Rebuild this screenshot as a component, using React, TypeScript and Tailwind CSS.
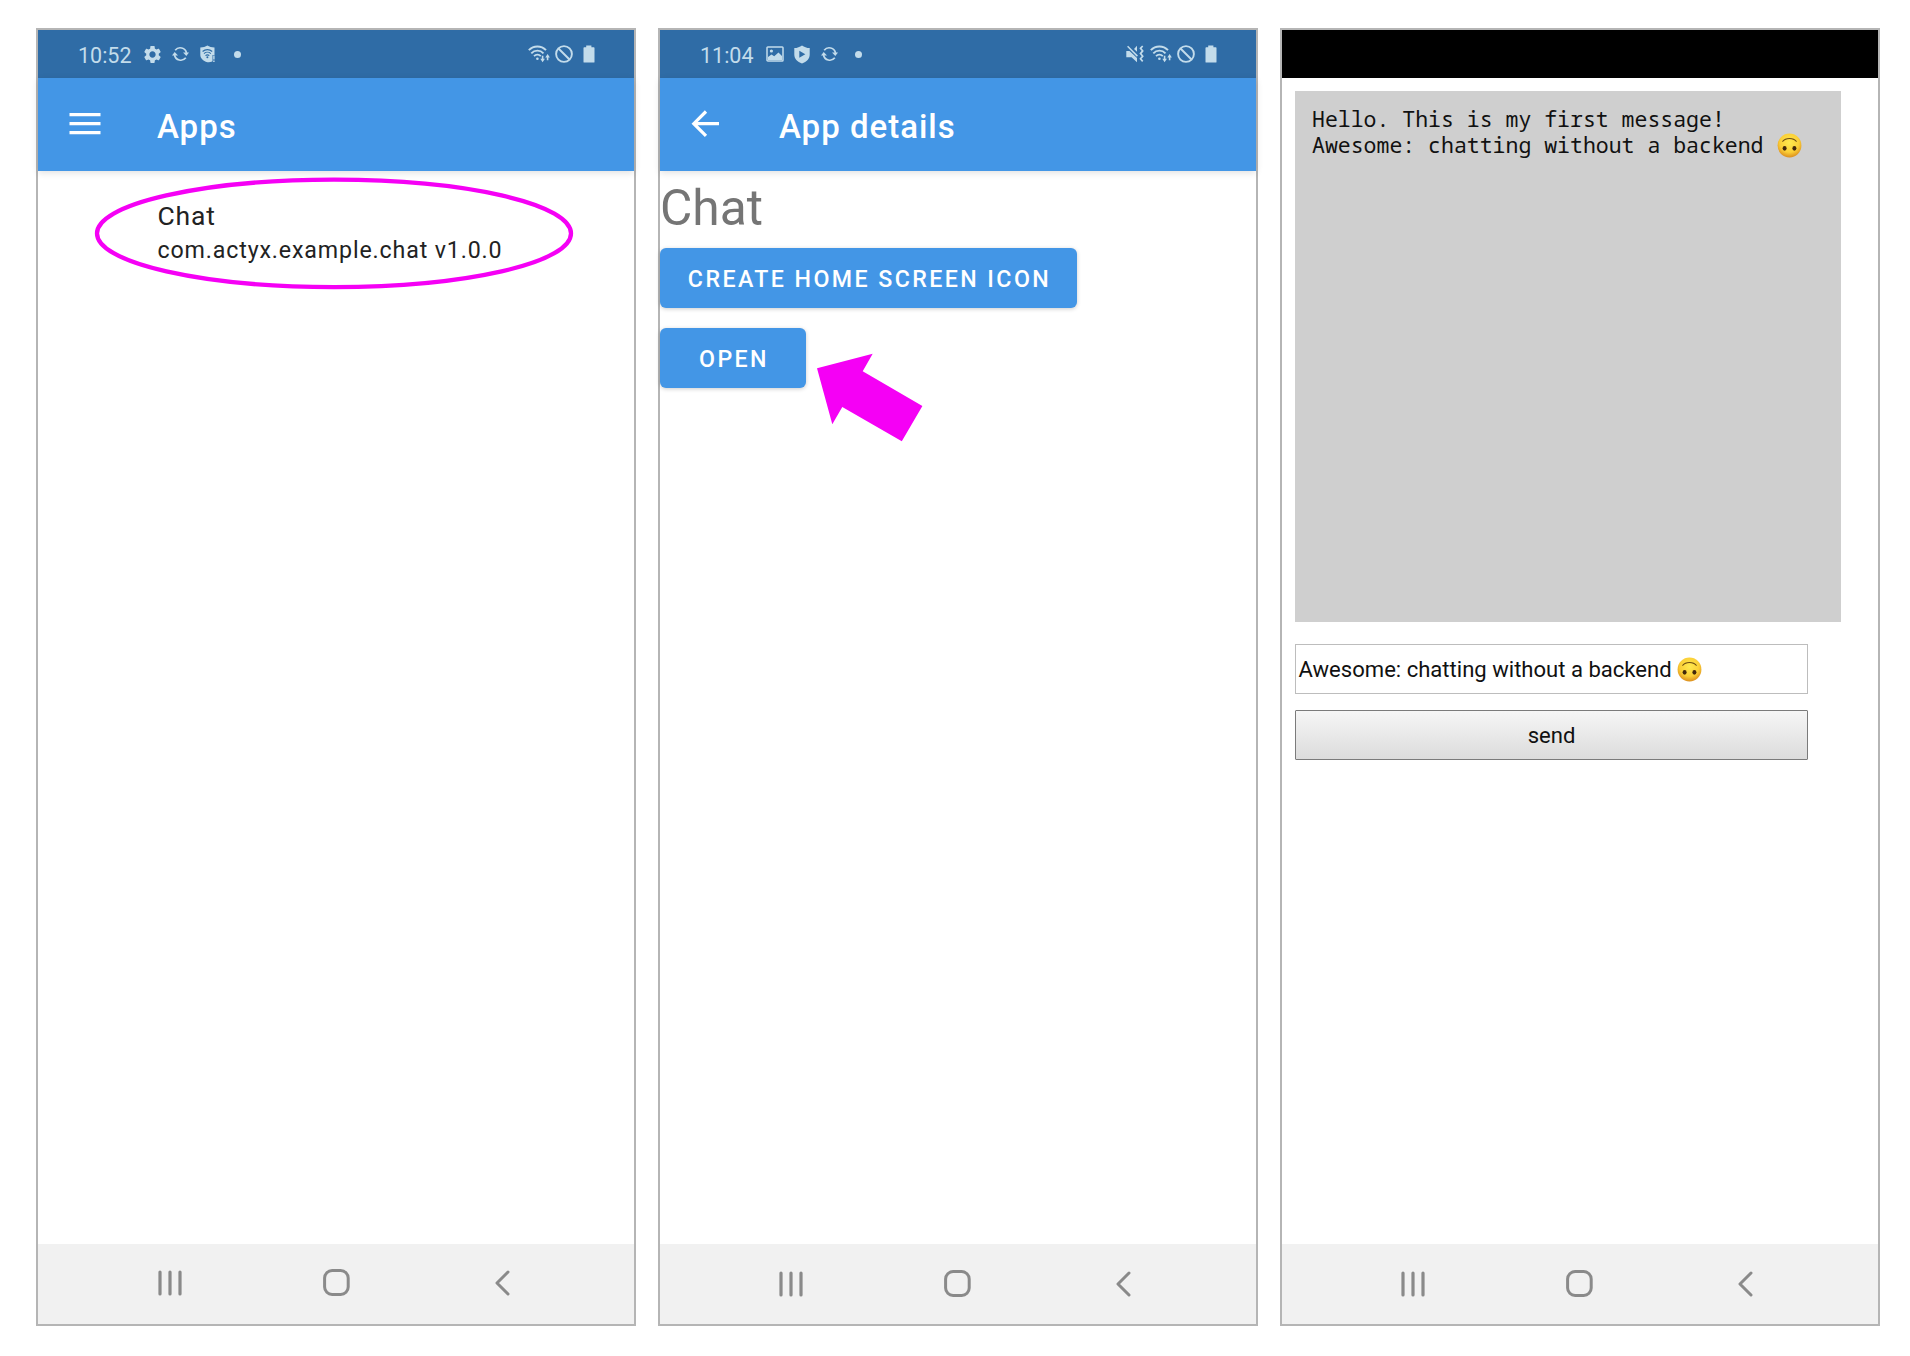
import React from "react";

const ICON = "#c3dceb";

function Gear() {
  return (
    <svg width="21" height="21" viewBox="0 0 24 24" fill={ICON}>
      <path d="M19.14 12.94c.04-.3.06-.61.06-.94 0-.32-.02-.64-.07-.94l2.03-1.58c.18-.14.23-.41.12-.61l-1.92-3.32c-.12-.22-.37-.29-.59-.22l-2.39.96c-.5-.38-1.03-.7-1.62-.94l-.36-2.54c-.04-.24-.24-.41-.48-.41h-3.84c-.24 0-.43.17-.47.41l-.36 2.54c-.59.24-1.13.57-1.62.94l-2.39-.96c-.22-.08-.47 0-.59.22L2.74 8.87c-.12.21-.08.47.12.61l2.03 1.58c-.05.3-.09.63-.09.94s.02.64.07.94l-2.03 1.58c-.18.14-.23.41-.12.61l1.92 3.32c.12.22.37.29.59.22l2.39-.96c.5.38 1.03.7 1.62.94l.36 2.54c.05.24.24.41.48.41h3.84c.24 0 .44-.17.47-.41l.36-2.54c.59-.24 1.13-.56 1.62-.94l2.39.96c.22.08.47 0 .59-.22l1.92-3.32c.12-.22.07-.47-.12-.61l-2.01-1.58zM12 15.6c-1.98 0-3.6-1.62-3.6-3.6s1.62-3.6 3.6-3.6 3.6 1.62 3.6 3.6-1.62 3.6-3.6 3.6z" />
    </svg>
  );
}

function Sync() {
  return (
    <svg width="17" height="16" viewBox="0 0 17 16" fill="none" stroke={ICON} strokeWidth="1.7">
      <path d="M3.2 4.2A6.4 6.4 0 0 1 14.5 7" />
      <path d="M13.8 11.8A6.4 6.4 0 0 1 2.5 9" />
      <path d="M11 6.400h6l-2.700 3.500z" fill={ICON} stroke="none" />
      <path d="M0 9.600h6L2.700 6.100z" fill={ICON} stroke="none" />
    </svg>
  );
}

function WifiShield() {
  return (
    <svg width="16" height="18" viewBox="0 0 16 18">
      <path d="M0.3 2.6C3.2 2.6 5.4 1.9 7.4.6c2 1.3 4.200 2 7.100 2V10h-2v6.200c-1.300.7-3 1-5.100 1.100C3 15.800.3 13.500.3 9.500z" fill={ICON} />
      <g fill="none" stroke="#2f6ca6" strokeWidth="1.100">
        <path d="M2.600 6.500a7 7 0 0 1 9.600 0M4 8.600a5 5 0 0 1 6.800 0M5.500 10.600a3 3 0 0 1 3.800 0" />
      </g>
      <circle cx="7.400" cy="12.300" r="1" fill="#2f6ca6" />
      <path d="M13.200 10.500h1.400v4h-1.400zM13.200 15.600h1.400v1.500h-1.400z" fill={ICON} />
    </svg>
  );
}

function PlayShield() {
  return (
    <svg width="16" height="19" viewBox="0 0 16 19">
      <path d="M8 .4C10.300 2 12.600 2.900 15.700 3v6.500c0 4.200-3 7.400-7.700 9-4.700-1.600-7.700-4.800-7.700-9V3C3.400 2.900 5.700 2 8 .4z" fill={ICON} />
      <path d="M5.300 5.700v7l6-3.500z" fill="#2f6ca6" />
    </svg>
  );
}

function Picture() {
  return (
    <svg width="18" height="16" viewBox="0 0 18 16">
      <rect x="1" y="1" width="16" height="14" rx=".8" fill="none" stroke={ICON} strokeWidth="1.500" />
      <circle cx="5.400" cy="5" r="1.600" fill={ICON} />
      <path d="M2 14v-3l3.500-2.600 2.700 1.800L12.500 6.500 16 10v4z" fill={ICON} />
    </svg>
  );
}

function Wifi() {
  return (
    <svg width="22" height="18" viewBox="0 0 22 18" fill="none" stroke={ICON} strokeWidth="1.900">
      <path d="M.8 5.100a12 12 0 0 1 17.200 0M3.300 8.300a8.400 8.400 0 0 1 12.200 0M6 11.100a5 5 0 0 1 6.800 0" />
      <circle cx="9.400" cy="13.700" r="1.300" fill={ICON} stroke="none" />
      <path d="M14.600 10.800v4M19.600 15.300v-4" strokeWidth="1.600" />
      <path d="M12.300 13.800h4.600l-2.300 3.500zM17.300 12.500h4.600L19.600 9z" fill={ICON} stroke="none" />
    </svg>
  );
}

function Blocked() {
  return (
    <svg width="18" height="18" viewBox="0 0 18 18" fill="none" stroke={ICON} strokeWidth="1.900">
      <circle cx="9" cy="9" r="7.900" />
      <path d="M3.500 3.500l11 11" />
    </svg>
  );
}

function Battery() {
  return (
    <svg width="12" height="18" viewBox="0 0 12 18" fill={ICON}>
      <path d="M3.200.5h5.200v1.700h2.400q.7 0 .7.700v14q0 .7-.7.700H1.200q-.7 0-.7-.7v-14q0-.7.7-.7h2z" />
    </svg>
  );
}

function MuteVibrate() {
  return (
    <svg width="18" height="18" viewBox="0 0 18 18">
      <path d="M.3 6h3.200L11 13v4.300L5.600 12.300H.3zM11 .8v6L8 4z" fill={ICON} />
      <path d="M1.600 1.300l9.800 9.800" stroke={ICON} strokeWidth="1.500" />
      <path d="M16.700 1l-2.200 2.300 2.200 2.600-2.200 2.700 2.200 2.600-2.200 2.600 2.200 2.600" fill="none" stroke={ICON} strokeWidth="1.700" />
    </svg>
  );
}

function Dot() {
  return <span className="size-[7px] rounded-full bg-[#c3dceb]" />;
}

function Smiley() {
  return (
    <svg className="inline-block" width="25" height="25" viewBox="0 0 25 25" role="img" aria-label="🙃">
      <defs>
        <radialGradient id="face" cx=".5" cy=".38" r=".62">
          <stop offset="0" stopColor="#ffe94f" />
          <stop offset=".65" stopColor="#fbcf37" />
          <stop offset="1" stopColor="#dc8f1e" />
        </radialGradient>
      </defs>
      <circle cx="12.500" cy="12.500" r="11.900" fill="url(#face)" />
      <path d="M5.800 8.300C8.500 4.600 16.500 4.600 19.200 8.300" fill="none" stroke="#6b4a12" strokeWidth="1.100" strokeLinecap="round" />
      <ellipse cx="7.600" cy="15.300" rx="2" ry="2.400" fill="#43280b" />
      <ellipse cx="17.400" cy="15.300" rx="2" ry="2.400" fill="#43280b" />
    </svg>
  );
}

function NavBar({ pad }: { pad: string }) {
  return (
    <nav className={`flex h-20 shrink-0 items-center bg-[#f1f1f1] ${pad}`}>
      <svg width="24" height="26" viewBox="0 0 24 26" stroke="#8a8a8a" strokeWidth="3.200" strokeLinecap="round">
        <path d="M2 2v22M12 2v22M22 2v22" />
      </svg>
      <svg className="ml-[141px]" width="27" height="27" viewBox="0 0 27 27" fill="none" stroke="#8a8a8a" strokeWidth="3">
        <rect x="1.600" y="1.600" width="23.600" height="23.800" rx="7.500" />
      </svg>
      <svg className="ml-[145px]" width="15" height="26" viewBox="0 0 15 26" fill="none" stroke="#8a8a8a" strokeWidth="3" strokeLinecap="round" strokeLinejoin="round">
        <path d="M13 2L2 13l11 11" />
      </svg>
    </nav>
  );
}

function TopBar({ icon, title, pad }: { icon: React.ReactNode; title: string; pad: string }) {
  return (
    <header className={`flex h-[93px] shrink-0 items-center bg-[#4396e6] text-white shadow-[0_2px_7px_rgba(0,0,0,0.12)] ${pad}`}>
      <div className="flex w-[88px] items-center pb-0.5">{icon}</div>
      <h1 className="pt-[5px] text-[33px] leading-10 font-medium tracking-[1px]">{title}</h1>
    </header>
  );
}

const phone = "flex h-[1298px] shrink-0 flex-col border-2 border-[#b5b5b5] bg-white";
const status = "flex h-12 shrink-0 items-center bg-[#2f6ca6]";
const clock = "pt-[3px] text-[21.5px] leading-6 text-[#c3dceb] w-[54px] whitespace-nowrap";
const button =
  "flex h-[60px] items-center justify-center rounded-[6px] bg-[#4396e6] pt-0.5 pl-0.5 text-[23.2px] font-medium tracking-[2.42px] text-white shadow-[0_1px_4px_rgba(0,0,0,0.2)]";

export default function App() {
  return (
    <main className="flex h-[1356px] w-[1910px] bg-white pt-7 pl-9 font-[Roboto,sans-serif]">
      <section className={`${phone} w-[600px]`}>
        <div className={`${status} pl-10`}>
          <span className={clock}>10:52</span>
          <div className="ml-[10px] flex items-center">
            <Gear />
            <span className="ml-[9px] flex"><Sync /></span>
            <span className="ml-[11px] flex"><WifiShield /></span>
            <span className="ml-[18px] flex"><Dot /></span>
          </div>
          <div className="mr-[39px] ml-auto flex items-center">
            <Wifi />
            <span className="ml-[5px] flex"><Blocked /></span>
            <span className="ml-[10px] flex"><Battery /></span>
          </div>
        </div>
        <TopBar
          pad="pl-[31px]"
          title="Apps"
          icon={
            <svg width="32" height="24" viewBox="0 0 32 24" stroke="#fff" strokeWidth="3.100">
              <path d="M.5 2.600h31M.5 11.600h31M.5 20.600h31" />
            </svg>
          }
        />
        <div className="relative grow pt-[29px] pl-[119.500px] text-[#222]">
          <p className="text-[26.500px] leading-8 tracking-[0.83px]">Chat</p>
          <p className="mt-0.5 text-[23.200px] leading-8 tracking-[0.86px]">com.actyx.example.chat v1.0.0</p>
          <svg className="absolute top-[6px] left-[56px]" width="480" height="114" viewBox="94 177 480 114" fill="none">
            <ellipse cx="334" cy="233.400" rx="237" ry="53.700" stroke="#f500f5" strokeWidth="4.300" />
          </svg>
        </div>
        <NavBar pad="pl-[120px] pb-[3px]" />
      </section>

      <section className={`${phone} ml-[22px] w-[600px]`}>
        <div className={`${status} pl-10`}>
          <span className={clock}>11:04</span>
          <div className="ml-3 flex items-center">
            <Picture />
            <span className="ml-[10px] flex"><PlayShield /></span>
            <span className="ml-[11px] flex"><Sync /></span>
            <span className="ml-[17px] flex"><Dot /></span>
          </div>
          <div className="mr-[39px] ml-auto flex items-center">
            <MuteVibrate />
            <span className="ml-[6px] flex"><Wifi /></span>
            <span className="ml-[5px] flex"><Blocked /></span>
            <span className="ml-[10px] flex"><Battery /></span>
          </div>
        </div>
        <TopBar
          pad="pl-[31px]"
          title="App details"
          icon={
            <svg width="30" height="28" viewBox="0 0 30 28" fill="none" stroke="#fff" strokeWidth="3.200">
              <path d="M15 1.500L2.800 13.700 15 25.900M2.800 13.700H28" />
            </svg>
          }
        />
        <div className="relative flex grow flex-col items-start pt-[7px]">
          <h2 className="text-[49.700px] leading-[60px] text-[#757575]">Chat</h2>
          <button className={`${button} mt-[10px] w-[417px]`}>CREATE HOME SCREEN ICON</button>
          <button className={`${button} mt-5 w-[146px]`}>OPEN</button>
          <svg className="absolute top-[182px] left-[156px]" width="108" height="90" viewBox="816 353 108 90" fill="#f500f5">
            <path d="M817 368.200L872.700 353.700 862.700 371.300 922.400 406 901.800 441.300 842.300 407 832.300 424.200z" />
          </svg>
        </div>
        <NavBar pad="pl-[119px] pb-px" />
      </section>

      <section className={`${phone} ml-[22px] w-[600px]`}>
        <div className="h-12 shrink-0 bg-black" />
        <div className="flex grow flex-col pt-[13px] pl-[13px] text-[#111]">
          <div className="h-[531px] w-[546px] bg-[#cfcfcf] pt-[15px] pl-[17px] font-['Noto_Sans_Mono','Droid_Sans_Mono','DejaVu_Sans_Mono',monospace] text-[21.500px] leading-[26px] whitespace-pre">
            <p>Hello. This is my first message!</p>
            <p className="flex items-center">
              <span>Awesome: chatting without a backend </span>
              <span className="ml-px flex"><Smiley /></span>
            </p>
          </div>
          <div className="mt-[22px] flex h-[50px] w-[513px] items-center border border-[#bdbdbd] bg-white pl-[2.500px] text-[22.070px] whitespace-pre">
            <span className="pt-px">Awesome: chatting without a backend </span>
            <Smiley />
          </div>
          <button className="mt-4 h-[50px] w-[513px] rounded-[1px] border border-[#7b7b7b] bg-linear-to-b from-[#f6f6f6] to-[#dcdcdc] pt-px text-[22.070px]">
            send
          </button>
        </div>
        <NavBar pad="pl-[119px] pb-px" />
      </section>
    </main>
  );
}
